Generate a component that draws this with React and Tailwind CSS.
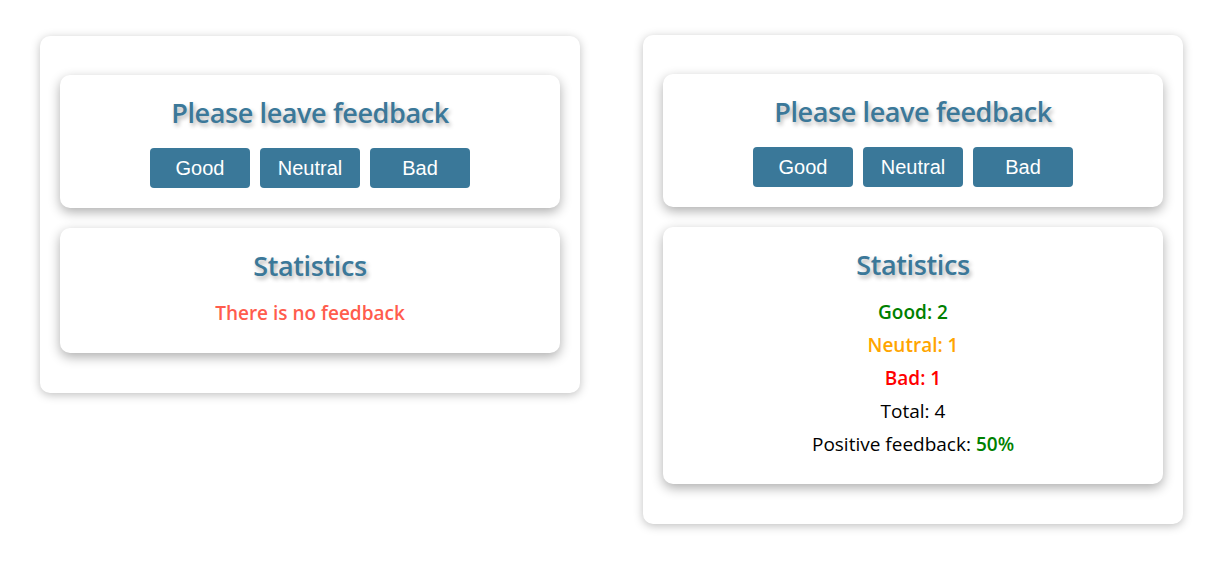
import React from "react";

const headingCls =
  "text-[27px] leading-[36px] tracking-[-0.4px] font-semibold text-[#3b7899] [text-shadow:2px_3px_4px_rgba(0,0,0,0.3)] text-center";

function Widget({ stats }) {
  const total = stats ? stats.good + stats.neutral + stats.bad : 0;
  return (
    <div className="w-[540px] bg-white rounded-[10px] shadow-[0_2px_10px_rgba(0,0,0,0.25)] px-5 pt-[39px] pb-10 flex flex-col gap-5">
      <section className="bg-white rounded-[10px] shadow-[0_4px_12px_rgba(0,0,0,0.32)] pt-5 pb-5 flex flex-col items-center">
        <h2 className={headingCls}>Please leave feedback</h2>
        <div className="mt-[17px] flex gap-[10px]">
          {["Good", "Neutral", "Bad"].map((l) => (
            <button
              key={l}
              className="w-[100px] h-10 rounded-[4px] bg-[#3a7899] text-white text-[20px] font-['Liberation_Sans',Arial,sans-serif]"
            >
              {l}
            </button>
          ))}
        </div>
      </section>
      <section className="bg-white rounded-[10px] shadow-[0_4px_12px_rgba(0,0,0,0.32)] pt-5 pb-[23px] flex flex-col items-center">
        <h2 className={headingCls}>Statistics</h2>
        <div className="mt-[13px] text-[19px] leading-[33px] text-center">
          {stats ? (
            <>
              <p className="font-semibold text-[#008000]">Good: {stats.good}</p>
              <p className="font-semibold text-[#ffa500]">Neutral: {stats.neutral}</p>
              <p className="font-semibold text-[#ff0000]">Bad: {stats.bad}</p>
              <p className="text-black">Total: {total}</p>
              <p className="text-black">
                Positive feedback:{" "}
                <span className="font-semibold text-[#008000]">
                  {Math.round((stats.good / total) * 100)}%
                </span>
              </p>
            </>
          ) : (
            <p className="font-semibold text-[#ff5c4d]">There is no feedback</p>
          )}
        </div>
      </section>
    </div>
  );
}

export default function App() {
  return (
    <div className="min-h-[566px] bg-white font-['Open_Sans','Noto_Sans',sans-serif] pl-10 pt-[36px] flex items-start gap-[63px]">
      <Widget />
      <div className="-mt-px">
        <Widget stats={{ good: 2, neutral: 1, bad: 1 }} />
      </div>
    </div>
  );
}
